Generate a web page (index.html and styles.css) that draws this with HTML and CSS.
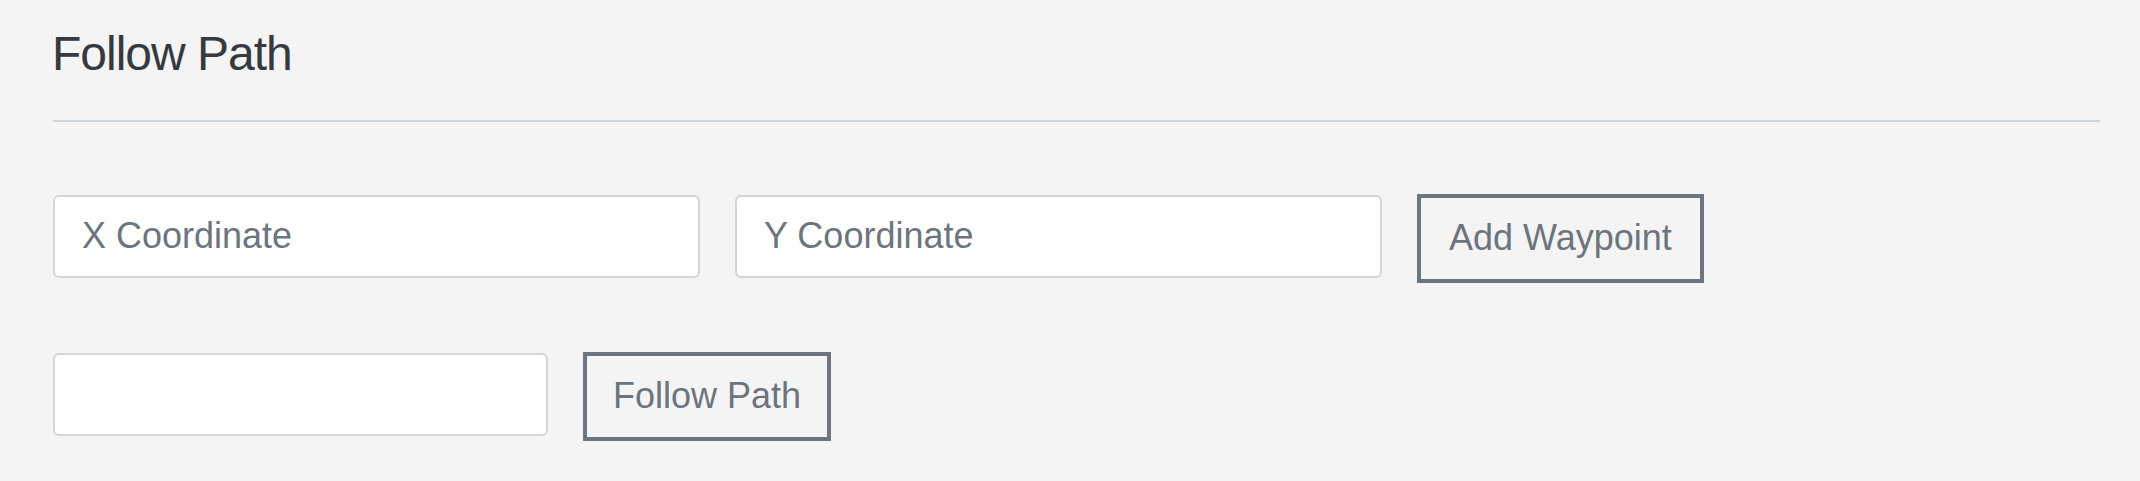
FILE: index.html
```html
<!DOCTYPE html>
<html lang="en">
<head>
<meta charset="utf-8">
<title>Follow Path</title>
<link rel="stylesheet" href="styles.css">
</head>
<body>
<main class="panel">
  <h2 class="panel-title">Follow Path</h2>
  <hr class="divider">
  <form class="row row-waypoint" onsubmit="return false">
    <input class="field field-wide" type="text" placeholder="X Coordinate">
    <input class="field field-wide" type="text" placeholder="Y Coordinate">
    <button class="btn-outline" type="button">Add Waypoint</button>
  </form>
  <form class="row row-follow" onsubmit="return false">
    <input class="field field-narrow" type="text">
    <button class="btn-outline" type="button">Follow Path</button>
  </form>
</main>
</body>
</html>
```

FILE: styles.css
```css
html, body {
  margin: 0;
  padding: 0;
  background: #f4f4f4;
}

body {
  font-family: "Liberation Sans", Helvetica, Arial, sans-serif;
  color: #343a40;
}

.panel {
  padding: 25px 40px 0 53px;
}

.panel-title {
  margin: 0 0 0 -1px;
  font-size: 48px;
  font-weight: 400;
  line-height: 1.2;
  letter-spacing: -1px;
  color: #343a40;
}

.divider {
  margin: 37px 0 0 0;
  border: 0;
  height: 2px;
  background: #cfd4d9;
}

.row {
  display: flex;
  align-items: flex-start;
  gap: 35px;
  margin: 0;
}

.row-waypoint {
  margin-top: 72px;
}

.row-follow {
  margin-top: 69px;
}

.field {
  box-sizing: border-box;
  height: 83px;
  margin-top: 1px;
  padding: 0 27px;
  border: 2px solid #d2d6db;
  border-radius: 6px;
  background: #fff;
  font-family: inherit;
  font-size: 36px;
  line-height: 54px;
  color: #495057;
  outline: none;
}

.field::placeholder {
  color: #6c757d;
  opacity: 1;
}

.field-wide {
  width: 647px;
}

.field-narrow {
  width: 495px;
}

.btn-outline {
  box-sizing: border-box;
  height: 89px;
  padding: 0 28px;
  border: 4px solid #6c757d;
  border-radius: 0;
  background: transparent;
  font-family: inherit;
  font-size: 36px;
  line-height: 54px;
  color: #6c757d;
  cursor: pointer;
}

.row-follow .btn-outline {
  padding: 0 26px;
}
```
